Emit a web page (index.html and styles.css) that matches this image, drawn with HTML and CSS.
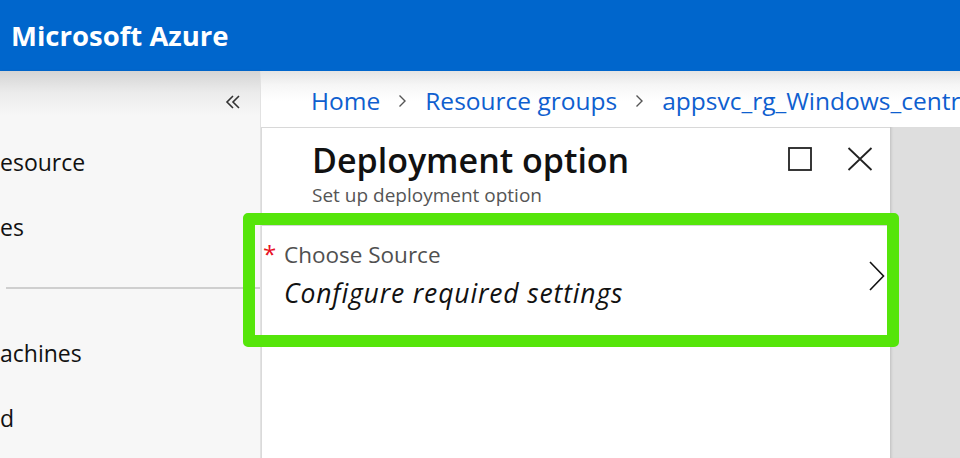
FILE: index.html
```html
<!DOCTYPE html>
<html lang="en">
<head>
<meta charset="utf-8">
<title>Deployment option</title>
<link rel="stylesheet" href="styles.css">
</head>
<body>
<header class="topbar">
  <span class="brand">Microsoft Azure</span>
</header>
<div class="shell">
  <nav class="sidebar">
    <div class="collapse-row">
      <svg class="collapse-icon" width="16" height="14" viewBox="0 0 16 14"><path d="M8 1 L2 7 L8 13 M14 1 L8 7 L14 13" fill="none" stroke="#333" stroke-width="1.6"/></svg>
    </div>
    <ul class="nav-list">
      <li class="nav-item">esource</li>
      <li class="nav-item">es</li>
    </ul>
    <hr class="nav-divider">
    <ul class="nav-list">
      <li class="nav-item">achines</li>
      <li class="nav-item">d</li>
    </ul>
  </nav>
  <main class="main">
    <div class="breadcrumb">
      <a class="crumb">Home</a>
      <svg class="sep" width="9" height="14" viewBox="0 0 9 14"><path d="M1.5 1.5 L7 7 L1.5 12.5" fill="none" stroke="#555" stroke-width="1.4"/></svg>
      <a class="crumb">Resource groups</a>
      <svg class="sep" width="9" height="14" viewBox="0 0 9 14"><path d="M1.5 1.5 L7 7 L1.5 12.5" fill="none" stroke="#555" stroke-width="1.4"/></svg>
      <a class="crumb">appsvc_rg_Windows_centr</a>
    </div>
    <div class="stage">
      <section class="blade">
        <div class="blade-head">
          <div class="blade-titles">
            <h1 class="blade-title">Deployment option</h1>
            <p class="blade-subtitle">Set up deployment option</p>
          </div>
          <div class="blade-actions">
            <svg width="24" height="24" viewBox="0 0 24 24"><rect x="1" y="1" width="22" height="22" fill="none" stroke="#222" stroke-width="1.8"/></svg>
            <svg width="26" height="24" viewBox="0 0 26 24"><path d="M1.5 1 L24.5 23 M24.5 1 L1.5 23" fill="none" stroke="#222" stroke-width="1.8"/></svg>
          </div>
        </div>
        <div class="option-wrap">
          <div class="option">
            <span class="req">*</span>
            <div class="option-text">
              <div class="option-label">Choose Source</div>
              <div class="option-value">Configure required settings</div>
            </div>
            <svg class="chev" width="16" height="30" viewBox="0 0 16 30"><path d="M1 1 L14.5 15 L1 29" fill="none" stroke="#111" stroke-width="1.6"/></svg>
          </div>
          <div class="highlight"></div>
        </div>
      </section>
      <div class="backdrop"></div>
    </div>
  </main>
</div>
</body>
</html>
```
FILE: styles.css
```css
* { box-sizing: border-box; }
html, body { margin: 0; padding: 0; }
body {
  width: 960px;
  height: 458px;
  overflow: hidden;
  font-family: "Open Sans", "Noto Sans", sans-serif;
  background: #fff;
}
.topbar {
  height: 71px;
  background: #0066cc;
  display: flex;
  align-items: center;
  padding-left: 11px;
  padding-bottom: 1px;
}
.brand {
  color: #fff;
  font-weight: 700;
  font-size: 27.5px;
  letter-spacing: 0;
}
.shell {
  display: flex;
  height: 387px;
}
.sidebar {
  width: 261px;
  flex: none;
  background: linear-gradient(#d4d4d4 0, #ececec 22px, #f7f7f7 45px, #f7f7f7 100%);
  border-right: 1px solid #e2e2e2;
  overflow: hidden;
  box-shadow: 1px 0 2px rgba(0,0,0,0.06);
}
.collapse-row {
  height: 59px;
  display: flex;
  justify-content: flex-end;
  align-items: center;
  padding-right: 19px;
  padding-top: 2px;
}
.nav-list {
  list-style: none;
  margin: 0;
  padding: 0;
}
.nav-item {
  height: 65px;
  line-height: 65px;
  font-size: 23px;
  color: #111;
  white-space: nowrap;
}
.nav-divider {
  margin: 27px 0 32px 6px;
  border: 0;
  height: 2px;
  background: #cfcfcf;
}
.main {
  flex: 1;
  display: flex;
  flex-direction: column;
  min-width: 0;
}
.breadcrumb {
  height: 56px;
  flex: none;
  display: flex;
  align-items: center;
  padding-left: 50px;
  padding-top: 2px;
  white-space: nowrap;
  overflow: hidden;
  background: linear-gradient(#e4e4e4 0, #f6f6f6 14px, #fff 30px);
}
.crumb {
  color: #0f5fcf;
  font-size: 24.5px;
  letter-spacing: 0;
}
.sep {
  flex: none;
  margin: 2px 18px 0 18px;
}
.stage {
  flex: 1;
  display: flex;
  min-height: 0;
}
.blade {
  width: 629px;
  flex: none;
  background: #fff;
  border-left: 1px solid #dadada;
  border-top: 1px solid #d8d8d8;
  position: relative;
}
.blade-head {
  display: flex;
  justify-content: space-between;
  padding: 10px 17px 0 50px;
  height: 97px;
}
.blade-title {
  margin: 0;
  font-size: 34px;
  font-weight: 600;
  color: #111;
  line-height: 44px;
  letter-spacing: 0;
}
.blade-subtitle {
  margin: 0;
  font-size: 19px;
  color: #555;
  line-height: 26px;
  letter-spacing: 0;
}
.blade-actions {
  display: flex;
  gap: 35px;
  padding-top: 9px;
}
.option-wrap {
  position: relative;
}
.option {
  height: 111px;
  border-top: 1px solid #d4d4d4;
  display: flex;
  align-items: flex-start;
  padding: 14px 5px 0 0;
}
.req {
  color: #e81123;
  font-size: 24px;
  width: 22px;
  padding-left: 1px;
  line-height: 24px;
  margin-top: 2px;
}
.option-text {
  flex: 1;
}
.option-label {
  font-size: 22.5px;
  color: #505050;
  line-height: 30px;
  letter-spacing: 0;
}
.option-value {
  font-size: 26.5px;
  font-style: italic;
  color: #111;
  line-height: 34px;
  margin-top: 6px;
  letter-spacing: 0.85px;
}
.chev {
  margin-top: 21px;
}
.highlight {
  position: absolute;
  left: -19px;
  top: -12px;
  width: 656px;
  height: 134px;
  border: 12px solid #55e50a;
  border-radius: 5px;
  pointer-events: none;
}
.backdrop {
  flex: 1;
  background: #dedede;
  box-shadow: inset 3px 0 3px -2px rgba(0,0,0,0.15);
}
```
